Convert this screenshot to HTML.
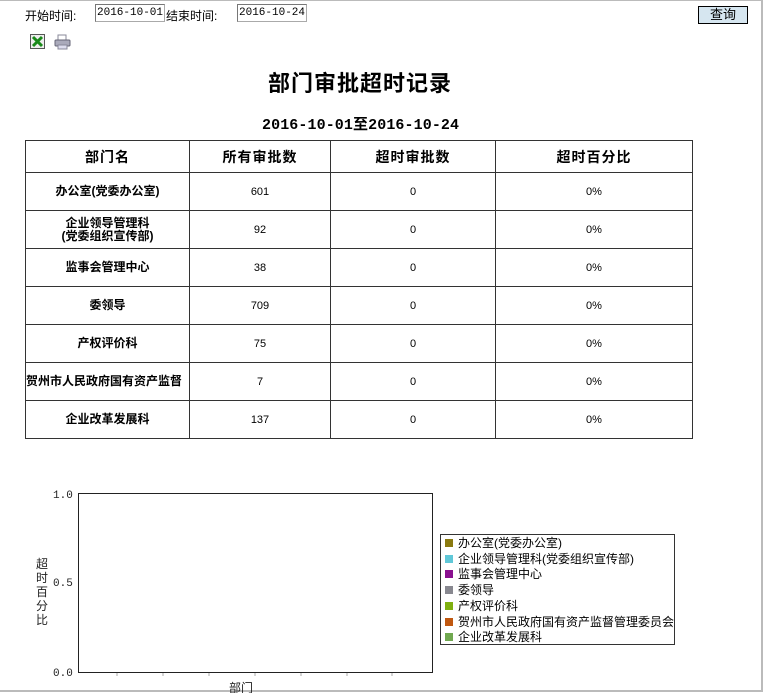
<!DOCTYPE html>
<html><head><meta charset="utf-8"><style>
body{margin:0;width:763px;height:693px;position:relative;background:#fff;font-family:"Liberation Sans","SimSun","Noto Sans CJK SC",sans-serif;overflow:hidden}
.frame{position:absolute;left:0;top:0;width:761px;height:689px;border-top:1px solid #bbb;border-right:2px solid #bbb;border-bottom:2px solid #bbb}
.a{position:absolute;white-space:nowrap}
.inp{position:absolute;border:1px solid #aaa;border-top-color:#777;border-left-color:#777;font-family:"Liberation Mono",monospace;font-size:11px;height:18px;line-height:16px;padding-left:1px;box-sizing:border-box}
table{position:absolute;left:25px;top:140px;border-collapse:collapse;width:668px;table-layout:fixed}
td{border:1px solid #333;text-align:center;font-size:11px;height:37px;padding:0;overflow:hidden;white-space:nowrap}
th{border:1px solid #333;font-size:14px;height:31px;padding:0;letter-spacing:1px}
td.n{font-weight:bold;font-size:12px;line-height:13px}
.lg{position:absolute;left:440px;top:534px;width:235px;height:111px;border:1px solid #333;font-size:12px;line-height:15.7px;padding-top:1px;box-sizing:border-box}
.lg div{padding-left:4px}
.lg i{display:inline-block;width:8px;height:8px;margin-right:5px;vertical-align:0}
</style></head><body>
<div class="frame"></div>
<div class="a" style="left:25px;top:7px;font-size:12px">开始时间:</div>
<div class="inp" style="left:95px;top:4px;width:70px">2016-10-01</div>
<div class="a" style="left:166px;top:7px;font-size:12px">结束时间:</div>
<div class="inp" style="left:237px;top:4px;width:70px">2016-10-24</div>
<div class="a" style="left:698px;top:6px;width:50px;height:18px;background:#d6e6f0;border:1px solid #000;box-sizing:border-box;font-size:13px;text-align:center;line-height:16px">查询</div>
<svg class="a" style="left:30px;top:34px" width="16" height="16"><rect x="0.5" y="0.5" width="14" height="14" fill="#eee" stroke="#555"/><path d="M3 3l9 9M12 3l-9 9" stroke="#1a8a1a" stroke-width="3"/></svg>
<svg class="a" style="left:54px;top:34px" width="17" height="16"><rect x="4" y="1" width="8" height="5" fill="#fff" stroke="#889"/><rect x="1" y="6" width="15" height="6" rx="1" fill="#aab" stroke="#667"/><rect x="4" y="11" width="9" height="4" fill="#dde" stroke="#889"/></svg>
<div class="a" style="left:0;width:720px;text-align:center;top:66px;font-size:22px;font-weight:bold;letter-spacing:1px">部门审批超时记录</div>
<div class="a" style="left:262px;top:113px;font-size:15px;font-weight:bold;font-family:'Liberation Mono','SimSun','Noto Sans CJK SC',monospace;letter-spacing:0.1px">2016-10-01至2016-10-24</div>
<table>
<colgroup><col style="width:164px"><col style="width:141px"><col style="width:165px"><col></colgroup>
<tr><th>部门名</th><th>所有审批数</th><th>超时审批数</th><th>超时百分比</th></tr>
<tr><td class="n">办公室(党委办公室)</td><td>601</td><td>0</td><td>0%</td></tr>
<tr><td class="n">企业领导管理科<br>(党委组织宣传部)</td><td>92</td><td>0</td><td>0%</td></tr>
<tr><td class="n">监事会管理中心</td><td>38</td><td>0</td><td>0%</td></tr>
<tr><td class="n">委领导</td><td>709</td><td>0</td><td>0%</td></tr>
<tr><td class="n">产权评价科</td><td>75</td><td>0</td><td>0%</td></tr>
<tr><td class="n" style="text-align:left">贺州市人民政府国有资产监督</td><td>7</td><td>0</td><td>0%</td></tr>
<tr><td class="n">企业改革发展科</td><td>137</td><td>0</td><td>0%</td></tr>
</table>
<svg class="a" style="left:0;top:480px" width="440" height="213">
<rect x="78.5" y="13.5" width="354" height="179" fill="#fff" stroke="#222"/>
<g stroke="#aaa"><line x1="117" y1="193" x2="117" y2="196"/><line x1="163" y1="193" x2="163" y2="196"/><line x1="209" y1="193" x2="209" y2="196"/><line x1="255" y1="193" x2="255" y2="196"/><line x1="301" y1="193" x2="301" y2="196"/><line x1="347" y1="193" x2="347" y2="196"/><line x1="392" y1="193" x2="392" y2="196"/></g>
<g font-family="Liberation Mono,monospace" font-size="11" fill="#222"><text x="53" y="18">1.0</text><text x="53" y="106">0.5</text><text x="53" y="196">0.0</text></g>
<g font-size="12" fill="#222"><text x="36" y="88">超</text><text x="36" y="102">时</text><text x="36" y="116">百</text><text x="36" y="130">分</text><text x="36" y="144">比</text><text x="229" y="212">部门</text></g>
</svg>
<div class="lg">
<div><i style="background:#8a7a10"></i>办公室(党委办公室)</div>
<div><i style="background:#60c8d8"></i>企业领导管理科(党委组织宣传部)</div>
<div><i style="background:#8a1090"></i>监事会管理中心</div>
<div><i style="background:#888890"></i>委领导</div>
<div><i style="background:#80b010"></i>产权评价科</div>
<div><i style="background:#c05810"></i>贺州市人民政府国有资产监督管理委员会</div>
<div><i style="background:#70a850"></i>企业改革发展科</div>
</div>
</body></html>
